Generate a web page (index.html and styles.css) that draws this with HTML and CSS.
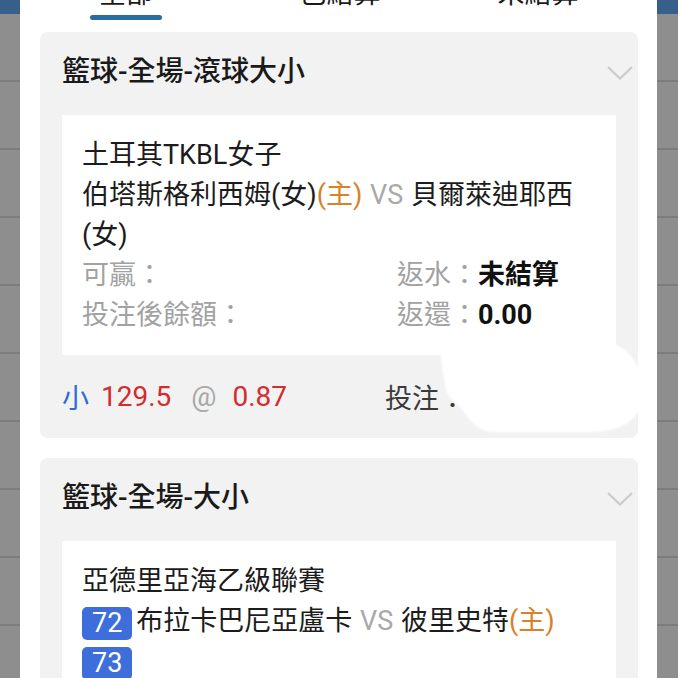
FILE: index.html
```html
<!DOCTYPE html>
<html lang="zh-Hant">
<head>
<meta charset="utf-8">
<title>注單</title>
<link rel="stylesheet" href="styles.css">
</head>
<body>
<div class="modal">
  <div class="tabs">
    <div class="tab tab-first"><span class="tab-label">全部</span><span class="tab-bar"></span></div>
    <div class="tab tab-second"><span class="tab-label">已結算</span></div>
    <div class="tab tab-third"><span class="tab-label">未結算</span></div>
  </div>

  <div class="card">
    <div class="card-head">
      <span class="card-title">籃球-全場-滾球大小</span>
      <svg class="chev" width="26" height="14" viewBox="0 0 26 14"><polyline points="1,1 13,12.5 25,1" fill="none" stroke="#cacaca" stroke-width="2"/></svg>
    </div>
    <div class="detail">
      <div class="league">土耳其TKBL女子</div>
      <div class="match">伯塔斯格利西姆(女)<span class="home">(主)</span> <span class="vs">VS</span> 貝爾萊迪耶西(女)</div>
      <div class="stats">
        <div class="stat"><span class="lbl">可贏：</span></div>
        <div class="stat"><span class="lbl">返水：</span><span class="val">未結算</span></div>
        <div class="stat"><span class="lbl">投注後餘額：</span></div>
        <div class="stat"><span class="lbl">返還：</span><span class="val num">0.00</span></div>
      </div>
    </div>
    <div class="card-foot">
      <div class="pick"><span class="side">小</span><span class="line">129.5</span><span class="at">@</span><span class="odds">0.87</span></div>
      <div class="stake">投注：</div>
    </div>
    <svg class="blot" width="215" height="100" viewBox="434 338 215 100"><path d="M446 349 C500 341 580 341 615 345 C630 349 633 361 640 369 C647 380 645 400 637 413 C629 426 611 432 590 432 L492 432 C476 430 468 418 462 409 C456 402 448 398 446 390 C444 378 441 362 441 355 C441 351 443 349 446 349 Z" fill="#ffffff"/></svg>
  </div>

  <div class="card">
    <div class="card-head">
      <span class="card-title">籃球-全場-大小</span>
      <svg class="chev" width="26" height="14" viewBox="0 0 26 14"><polyline points="1,1 13,12.5 25,1" fill="none" stroke="#cacaca" stroke-width="2"/></svg>
    </div>
    <div class="detail">
      <div class="league">亞德里亞海乙級聯賽</div>
      <div class="match"><span class="score">72</span>布拉卡巴尼亞盧卡 <span class="vs">VS</span> 彼里史特<span class="home">(主)</span> <span class="score">73</span></div>
      <div class="stats">
        <div class="stat"><span class="lbl">可贏：</span></div>
        <div class="stat"><span class="lbl">返水：</span><span class="val">未結算</span></div>
        <div class="stat"><span class="lbl">投注後餘額：</span></div>
        <div class="stat"><span class="lbl">返還：</span><span class="val num">0.00</span></div>
      </div>
    </div>
  </div>
</div>
</body>
</html>
```

FILE: styles.css
```css
html, body {
  margin: 0;
  padding: 0;
  height: 100%;
  overflow: hidden;
}

body {
  font-family: Roboto, "Noto Sans CJK TC", "Noto Sans", sans-serif;
  color: #1c1c1c;
  background:
    linear-gradient(#365f8a, #365f8a) top left / 100% 14px no-repeat,
    repeating-linear-gradient(to bottom, #8e8e8e 0, #8e8e8e 66px, #7c7c7c 66px, #7c7c7c 68px) 0 14px / 100% 100% no-repeat,
    #8e8e8e;
}

.modal {
  margin: 0 21px 0 20px;
  background: #ffffff;
  min-height: 100%;
  padding-bottom: 40px;
}

/* tabs */
.tabs {
  display: flex;
  padding-left: 46px;
  margin-top: -26px;
}

.tab {
  width: 120px;
  display: flex;
  flex-direction: column;
  align-items: center;
}

.tab-second { margin-left: 94px; }
.tab-third { margin-left: 78px; }

.tab-label {
  font-size: 27px;
  line-height: 40px;
  color: #1a1a1a;
}

.tab-bar {
  width: 72px;
  height: 5px;
  border-radius: 3px;
  background: #2a6c9f;
  margin-top: 1px;
}

/* cards */
.card {
  position: relative;
  margin: 12px 19px 20px 20px;
  background: #f2f2f2;
  border-radius: 8px;
}

.card + .card {
  margin-top: 20px;
}

.card-head {
  display: flex;
  justify-content: space-between;
  align-items: center;
  padding: 20px 5px 23px 22px;
}

.card-title {
  font-size: 28px;
  line-height: 40px;
  font-weight: 500;
  color: #1a1a1a;
}

.chev {
  display: block;
  margin-top: 2px;
}

.detail {
  margin: 0 22px;
  background: #ffffff;
  padding: 20px 20px;
  font-size: 27px;
  line-height: 40px;
}

.match {
  word-spacing: 1px;
}

.home { color: #d98126; }
.vs { color: #a9a9a9; }

.score {
  display: inline-block;
  background: #3d6edb;
  color: #ffffff;
  border-radius: 5px;
  padding: 0 10px;
  line-height: 33px;
  margin-right: 4px;
  vertical-align: middle;
  position: relative;
  top: 1px;
}

.stats {
  display: grid;
  grid-template-columns: 315px 1fr;
}

.lbl { color: #a2a2a2; }
.val { color: #111111; font-weight: 700; }

.card-foot {
  display: grid;
  grid-template-columns: 323px 1fr;
  align-items: center;
  height: 83px;
  padding: 0 22px;
  font-size: 28px;
}

.pick {
  display: flex;
  align-items: center;
}

.side { color: #2d6bd3; margin-right: 12px; font-size: 27px; }
.line { color: #d42b2f; margin-right: 20px; }
.at { color: #a8a8a8; margin-right: 16px; }
.odds { color: #d42b2f; }

.stake { color: #3a3a3a; font-size: 27px; }

.blot {
  position: absolute;
  left: 394px;
  top: 306px;
  filter: blur(1.2px);
}
```
